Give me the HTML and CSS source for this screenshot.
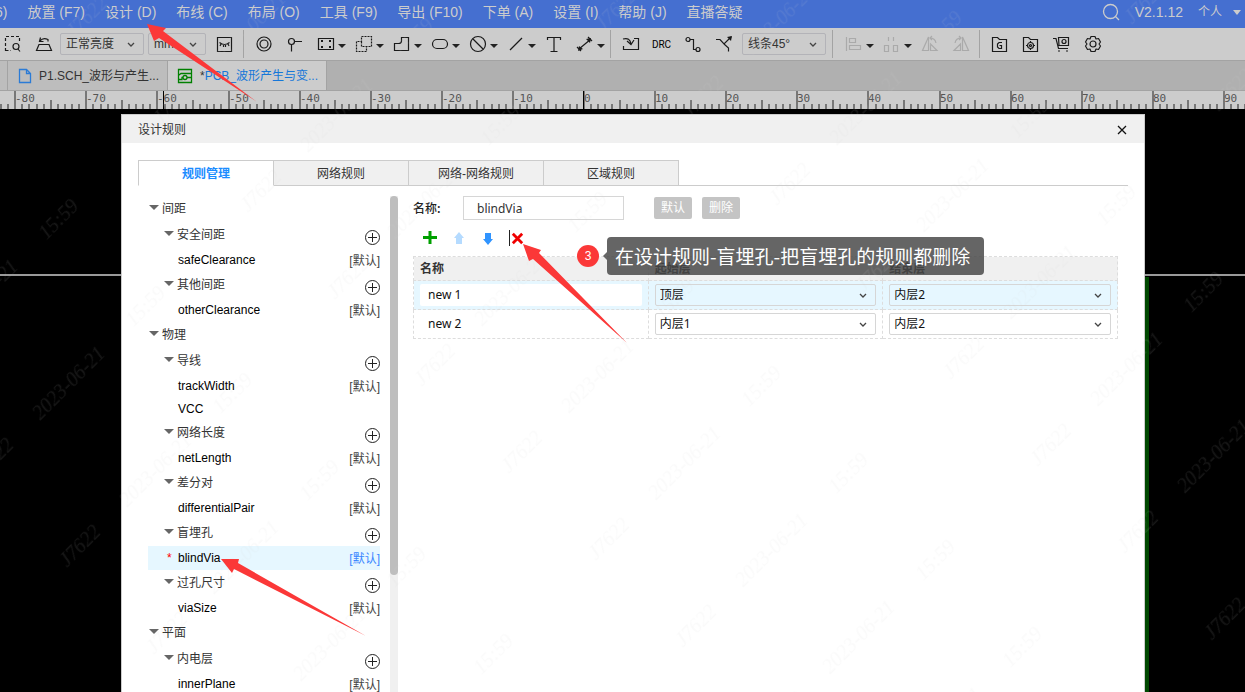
FILE: index.html
```html
<!DOCTYPE html>
<html lang="zh-CN">
<head>
<meta charset="utf-8">
<title>设计规则</title>
<link rel="stylesheet" href="styles.css">
</head>
<body>
<div class="app">
  <header class="menubar">
    <nav class="menu">
      <a href="#">6)</a><a href="#">放置 (F7)</a><a href="#">设计 (D)</a><a href="#">布线 (C)</a><a href="#">布局 (O)</a><a href="#">工具 (F9)</a><a href="#">导出 (F10)</a><a href="#">下单 (A)</a><a href="#">设置 (I)</a><a href="#">帮助 (J)</a><a href="#">直播答疑</a>
    </nav>
    <div class="account">
      <button class="search" aria-label="搜索"><svg width="18" height="18" viewBox="0 0 18 18"><circle cx="8.500" cy="8.500" r="7"/><path d="M13.500 13.500L17 17"/></svg></button>
      <span class="version">V2.1.12</span>
      <button class="user">个人<i class="caret caret-light"></i></button>
    </div>
  </header>

  <div class="toolbar">
    <button class="tool" aria-label="框选缩放"><svg viewBox="0 0 20 20"><path stroke-dasharray="3 2" d="M2.500 17V2.500H16.500V8M2.500 16.500H8"/><circle cx="13" cy="12.500" r="3"/><path d="M15 15L17 17.500"/></svg></button>
    <button class="tool" aria-label="翻板"><svg viewBox="0 0 20 20"><path d="M5 10.500L2.500 16.500H17.500L15 10.500Z M6 7Q9 3 14 5.500V7.500M6.500 3.500L5.500 7.500H9.500"/></svg></button>
    <select class="field brightness" aria-label="亮度"><option>正常亮度</option></select>
    <select class="field unit" aria-label="单位"><option>mm</option></select>
    <button class="tool" aria-label="隐藏"><svg viewBox="0 0 20 20"><path d="M2.500 3.500H16.500V17.500H2.500Z M4.500 8.500Q9.500 12.500 14.500 8.500M6 10L5 12M8.500 11V13M10.500 11V13M13 10L14 12"/></svg></button>
    <i class="divider"></i>
    <button class="tool" aria-label="焊盘"><svg viewBox="0 0 20 20"><circle cx="10" cy="10" r="7"/><circle cx="10" cy="10" r="4"/></svg></button>
    <button class="tool" aria-label="过孔"><svg viewBox="0 0 20 20"><circle cx="6.500" cy="7.500" r="3"/><path d="M9.500 7.500H17M6.500 10.500V17.500"/></svg></button>
    <button class="tool wide" aria-label="封装"><svg viewBox="0 0 20 20"><path d="M2.500 4.500H17.500V15.500H2.500Z"/><path d="M5 7H7M13 7H15M5 13H7M13 13H15" stroke-width="2"/></svg><i class="caret"></i></button>
    <button class="tool wide" aria-label="区域"><svg viewBox="0 0 20 20"><path stroke-dasharray="2 1" d="M7.500 2.500H17.500V12.500H12.500V17.500H2.500V7.500H7.500Z M7.500 7.500V12.500H12.500"/></svg><i class="caret"></i></button>
    <button class="tool wide" aria-label="填充"><svg viewBox="0 0 20 20"><path d="M9.500 3.500H16.500V16.500H2.500V9.500H6.500Q9.500 9.500 9.500 7Z"/></svg><i class="caret"></i></button>
    <button class="tool wide" aria-label="槽"><svg viewBox="0 0 20 20"><rect x="2.500" y="5.500" width="15" height="9" rx="4.500"/></svg><i class="caret"></i></button>
    <button class="tool wide" aria-label="禁止区"><svg viewBox="0 0 20 20"><circle cx="10" cy="10" r="7.500"/><path d="M5 5L15 15"/></svg><i class="caret"></i></button>
    <button class="tool wide" aria-label="线"><svg viewBox="0 0 20 20"><path d="M4 16L16 4"/></svg><i class="caret"></i></button>
    <button class="tool" aria-label="文本"><svg viewBox="0 0 20 20"><path d="M3.500 6V3.500H16.500V6M10 3.500V17M6.500 17.500H13.500"/></svg></button>
    <button class="tool wide" aria-label="尺寸"><svg viewBox="0 0 20 20"><path d="M4 15L16 5M2 13L6 17M13 3L17 7"/><path class="solid" d="M3 17L4 12L8 15Z M16 4L11 5L15 9Z"/></svg><i class="caret"></i></button>
    <i class="divider"></i>
    <button class="tool" aria-label="导入变更"><svg viewBox="0 0 20 20"><path d="M13 4.500H17.500V15.500H2.500V12M2 5Q9 3 10 10M6 7L10 10.500L13 6"/></svg></button>
    <button class="tool drc" aria-label="检查">DRC</button>
    <button class="tool" aria-label="布线"><svg viewBox="0 0 20 20"><circle cx="5" cy="5.500" r="2"/><circle cx="15" cy="15.500" r="2"/><path d="M7 5.500H10.500V15.500H13"/></svg></button>
    <button class="tool" aria-label="推挤"><svg viewBox="0 0 20 20"><path d="M2 5.500H6L10 10L17 3M10 10L14.500 14V17.500"/><path class="solid" d="M18 2L13 3L17 7Z"/></svg></button>
    <select class="field corner" aria-label="拐角"><option>线条45°</option></select>
    <i class="divider"></i>
    <button class="tool wide faded" aria-label="对齐"><svg viewBox="0 0 20 20"><path d="M2.500 3V17M5.500 4.500H11.500V8.500H5.500Z M5.500 11.500H16.500V15.500H5.500Z"/></svg><i class="caret"></i></button>
    <button class="tool wide faded" aria-label="分布"><svg viewBox="0 0 20 20"><path d="M6.500 3V7M11.500 3V7M2.500 11.500H6.500V17.500H2.500Z M11.500 11.500H15.500V17.500H11.500Z"/></svg><i class="caret"></i></button>
    <button class="tool faded" aria-label="左旋"><svg viewBox="0 0 20 20"><path d="M8.500 3V16.500H2.500Z M10.500 10L17 16.500H10.500Z M10 4Q15 4 16 9M12 2L10 4L12 6"/></svg></button>
    <button class="tool faded" aria-label="右旋"><svg viewBox="0 0 20 20"><path d="M11.500 3V16.500H17.500Z M9.500 10L3 16.500H9.500Z M10 4Q5 4 4 9M8 2L10 4L8 6"/></svg></button>
    <i class="divider"></i>
    <button class="tool" aria-label="Gerber"><svg viewBox="0 0 20 20"><path d="M2.500 17.500V3.500H7.500L9.500 5.500H16.500V17.500Z M12 8.500H9L7.500 10V13L9 14.500H11.500V11.500H9.500"/></svg></button>
    <button class="tool" aria-label="坐标文件"><svg viewBox="0 0 20 20"><path d="M2.500 17.500V3.500H7.500L9.500 5.500H16.500V17.500Z M9.500 7V9M9.500 14V16M5 11.500H7M12 11.500H14"/><circle cx="9.500" cy="11.500" r="3"/><circle cx="9.500" cy="11.500" r="1"/></svg></button>
    <button class="tool" aria-label="下单"><svg viewBox="0 0 20 20"><path d="M1 4.500H4L6.500 14.500H16M6.500 3.500H16.500V11.500H7Z M6 17H8M14 17H16"/><circle cx="12" cy="7.500" r="2"/></svg></button>
    <button class="tool" aria-label="设置"><svg viewBox="0 0 20 20"><path stroke-linejoin="round" d="M8 2.500H12L13 5L15.500 4.500L17.500 8L16 10L17.500 12L15.500 15.500L13 15L12 17.500H8L7 15L4.500 15.500L2.500 12L4 10L2.500 8L4.500 4.500L7 5Z"/><circle cx="10" cy="10" r="3"/></svg></button>
  </div>

  <div class="doctabs">
    <span class="stub"></span>
    <button class="doctab"><svg width="14" height="16" viewBox="0 0 14 16"><path d="M1.500 1.500H8.500L12.500 5.500V14.500H1.500Z M8.500 1.500V5.500H12.500"/></svg><span>P1.SCH_波形与产生...</span></button>
    <button class="doctab current"><svg width="16" height="16" viewBox="0 0 16 16"><path d="M1.500 1.500H14.500V14.500H1.500Z M2 7L4 5.500H14M2 11.500H5V9.500H6M10 9.500H14"/><circle cx="8" cy="9.500" r="2"/></svg><span><b>*</b>PCB_波形产生与变...</span></button>
  </div>

  <svg class="ruler" aria-hidden="true"></svg>

  <main class="canvas">
    <div class="outline"></div>
    <div class="board"></div>
    <section class="dialog" role="dialog" aria-label="设计规则">
      <div class="dialog-head"><h1>设计规则</h1><button aria-label="关闭"><svg width="10" height="10" viewBox="0 0 10 10"><path d="M1 1L9 9M9 1L1 9"/></svg></button></div>
      <div class="rule-tabs">
        <button class="active">规则管理</button><button>网络规则</button><button>网络-网络规则</button><button>区域规则</button>
      </div>
      <div class="rule-body">
        <ul class="tree">
          <li class="top"><i class="caret"></i><span>间距</span></li>
          <li class="sub"><i class="caret"></i><span>安全间距</span><button aria-label="添加"></button></li>
          <li class="leaf"><span>safeClearance</span><em>[默认]</em></li>
          <li class="sub"><i class="caret"></i><span>其他间距</span><button aria-label="添加"></button></li>
          <li class="leaf"><span>otherClearance</span><em>[默认]</em></li>
          <li class="top"><i class="caret"></i><span>物理</span></li>
          <li class="sub"><i class="caret"></i><span>导线</span><button aria-label="添加"></button></li>
          <li class="leaf"><span>trackWidth</span><em>[默认]</em></li>
          <li class="leaf plain"><span>VCC</span></li>
          <li class="sub"><i class="caret"></i><span>网络长度</span><button aria-label="添加"></button></li>
          <li class="leaf"><span>netLength</span><em>[默认]</em></li>
          <li class="sub"><i class="caret"></i><span>差分对</span><button aria-label="添加"></button></li>
          <li class="leaf"><span>differentialPair</span><em>[默认]</em></li>
          <li class="sub"><i class="caret"></i><span>盲埋孔</span><button aria-label="添加"></button></li>
          <li class="leaf selected"><b>*</b><span>blindVia</span><em>[默认]</em></li>
          <li class="sub"><i class="caret"></i><span>过孔尺寸</span><button aria-label="添加"></button></li>
          <li class="leaf"><span>viaSize</span><em>[默认]</em></li>
          <li class="top"><i class="caret"></i><span>平面</span></li>
          <li class="sub"><i class="caret"></i><span>内电层</span><button aria-label="添加"></button></li>
          <li class="leaf"><span>innerPlane</span><em>[默认]</em></li>
        </ul>
        <div class="scroll"><div class="thumb"></div></div>
        <div class="detail">
          <div class="name-row">
            <label for="rule-name">名称:</label><input id="rule-name" value="blindVia">
            <button disabled>默认</button><button disabled>删除</button>
          </div>
          <div class="actions">
            <button aria-label="新增"><svg viewBox="0 0 16 16"><path stroke="#00a000" stroke-width="3" d="M8 1V14M1 7.500H15"/></svg></button>
            <button aria-label="上移"><svg viewBox="0 0 16 16"><path fill="#b5dbff" d="M8 2L13 8H11V14H5V8H3Z"/></svg></button>
            <button aria-label="下移"><svg viewBox="0 0 16 16"><path fill="#3094ff" d="M8 15L13 9H11V3H5V9H3Z"/></svg></button>
            <button class="remove" aria-label="移除"><svg viewBox="0 0 16 16"><path stroke="#f00000" stroke-width="3" d="M3 3L13 13M13 3L3 13"/></svg></button>
          </div>
          <table>
            <thead><tr><th>名称</th><th>起始层</th><th>结束层</th></tr></thead>
            <tbody>
              <tr class="picked">
                <td><input aria-label="名称" value="new 1"></td>
                <td><select aria-label="起始层"><option>顶层</option></select></td>
                <td><select aria-label="结束层"><option>内层2</option></select></td>
              </tr>
              <tr>
                <td><input aria-label="名称" value="new 2"></td>
                <td><select aria-label="起始层"><option>内层1</option></select></td>
                <td><select aria-label="结束层"><option>内层2</option></select></td>
              </tr>
            </tbody>
          </table>
        </div>
      </div>
    </section>
  </main>

  <div class="callout"><span class="step">3</span><p>在设计规则-盲埋孔-把盲埋孔的规则都删除</p></div>

  <svg class="overlay" aria-hidden="true">
    <defs>
      <pattern id="stamp" width="379" height="123" patternUnits="userSpaceOnUse" patternTransform="rotate(-45)">
        <text x="25" y="80">J7622</text><text x="110" y="80">2023-06-21</text><text x="242" y="80">15:59</text>
      </pattern>
    </defs>
    <rect class="stamps" width="100%" height="100%" fill="url(#stamp)"/>
    <g class="arrows">
      <path d="M147 24L166 28L163 31L257 102L159 38L154 41Z"/>
      <path d="M523 244L541 250L539 253L627 343L533 259L529 261Z"/>
      <path d="M221 559L239 559L238 563L366 636L234 569L232 573Z"/>
    </g>
  </svg>
</div>
<script src="ruler.js"></script>
</body>
</html>
```

FILE: ruler.js
```js
const ns = 'http://www.w3.org/2000/svg';
const ruler = document.querySelector('.ruler');
const origin = 583;
const tenUnits = 71.1;

function add(tag, attrs, text) {
  const el = document.createElementNS(ns, tag);
  for (const key in attrs) el.setAttribute(key, attrs[key]);
  if (text !== undefined) el.textContent = text;
  ruler.appendChild(el);
}

for (let unit = -82; unit <= 93; unit++) {
  const x = Math.round(origin + unit * tenUnits / 10);
  const major = unit % 10 === 0;
  const top = major ? 0 : unit % 5 === 0 ? 9 : 13;
  add('rect', { x, y: top, width: 2, height: 18 - top, class: 'tick' });
  if (major) add('text', { x: x + 1, y: 11 }, unit);
}
for (const x of [163, origin]) add('rect', { x, y: 0, width: 1, height: 18, class: 'mark' });
```

FILE: styles.css
```css
* { box-sizing: border-box; }
body {
  margin: 0;
  font: 12px/16px "Liberation Sans", "Noto Sans CJK SC", sans-serif;
  color: #333;
}
button, input, select { font: inherit; color: inherit; margin: 0; padding: 0; border: 0; background: none; }
h1, p, ul { margin: 0; padding: 0; font-size: 12px; font-weight: normal; }
svg { fill: none; display: block; flex: none; }

.app {
  position: relative;
  height: 100vh;
  overflow: hidden;
  display: flex;
  flex-direction: column;
  background: #000;
}

.caret {
  flex: none;
  width: 0;
  border: 4px solid transparent;
  border-top: 4px solid #222;
  border-bottom: 0;
}
.caret-light { border-top: 5px solid #ccc; }

.menubar {
  flex: none;
  height: 28px;
  padding-bottom: 4px;
  display: flex;
  align-items: center;
  justify-content: space-between;
  background: #456fd0;
  color: #ccc;
  font-size: 14px;
}
.menu { display: flex; gap: 20px; margin-left: -5px; white-space: nowrap; }
.menu a { color: inherit; text-decoration: none; }
.account { display: flex; align-items: center; gap: 15px; padding-right: 4px; }
.search svg { stroke: #ccc; stroke-width: 1.3; }
.user { display: flex; align-items: center; gap: 11px; font-size: 12px; }

.toolbar {
  flex: none;
  height: 33px;
  display: flex;
  align-items: center;
  background: #ccc;
  border-bottom: 1px solid #a3a3a3;
}
.tool {
  flex: none;
  width: 31px;
  height: 24px;
  display: flex;
  align-items: center;
  justify-content: center;
}
.tool:first-child { margin-left: -3px; }
.tool svg { width: 20px; height: 20px; stroke: #1a1a1a; stroke-width: 1.2; }
.tool .solid { fill: #1a1a1a; stroke: none; }
.tool .caret { margin-top: 3px; }
.tool.wide { width: 38px; justify-content: flex-start; padding-left: 6px; gap: 2px; }
.tool.faded svg { stroke: #aaa; }
.tool.drc { font: 10px Roboto, sans-serif; color: #000; }
.divider { flex: none; width: 1px; height: 28px; margin: 0 4px 0 3px; background: #a3a3a3; }

select {
  appearance: none;
  background: url("data:image/svg+xml,%3Csvg xmlns='http://www.w3.org/2000/svg' width='8' height='5'%3E%3Cpath d='M1 1L4 4L7 1' fill='none' stroke='%23444' stroke-width='1.300'/%3E%3C/svg%3E") no-repeat right 8px center;
}
.field { flex: none; height: 22px; padding-left: 5px; border: 1px solid #b3b3b8; border-radius: 2px; }
.brightness { width: 84px; margin: 0 4px 0 1px; }
.unit { width: 58px; margin-right: 3px; }
.corner { width: 84px; margin: 0 3px; }
.corner + .divider { margin-right: 5px; }

.doctabs { flex: none; height: 30px; display: flex; background: #b0b0b0; border-bottom: 1px solid #a3a3a3; }
.stub { width: 8px; background: #bdbdbd; border-right: 1px solid #a3a3a3; }
.doctab {
  width: 160px;
  display: flex;
  align-items: center;
  gap: 7px;
  padding-left: 10px;
  background: #bdbdbd;
  border-right: 1px solid #a3a3a3;
  white-space: nowrap;
}
.doctab svg { stroke: #2b7bd6; stroke-width: 1.3; }
.doctab.current { width: 159px; padding-left: 9px; background: #ccc; color: #1677d9; }
.doctab.current svg { stroke: #008000; }
.doctab b { color: #333; font-weight: normal; }

.ruler { flex: none; width: 100%; height: 18px; background: #ccc; shape-rendering: crispEdges; }
.ruler text { font: 11px "DejaVu Sans Mono", monospace; fill: #555; }
.tick { fill: #777; }
.mark { fill: #000; }

.canvas { position: relative; flex: 1; min-height: 0; overflow: hidden; padding: 5px 100px 0 121px; }
.outline { position: absolute; left: 0; right: 0; top: 165px; height: 2px; background: #999; }
.board { position: absolute; right: 96px; width: 5px; top: 168px; bottom: 0; background: #004800; }

.dialog {
  position: relative;
  background: #fff;
  border: 1px solid #ccc;
  border-bottom: 0;
  min-height: 100%;
}
.dialog-head { height: 28px; padding: 2px 17px 0 16px; display: flex; align-items: center; justify-content: space-between; background: #f0f0f0; }
.dialog-head svg { stroke: #111; stroke-width: 1.3; }

.rule-tabs { display: flex; margin: 17px 16px 0; height: 26px; border-bottom: 1px solid #ccc; }
.rule-tabs button { width: 135px; height: 26px; padding-top: 2px; background: #f0f0f0; border: 1px solid #ccc; border-left-width: 0; }
.rule-tabs .active { width: 136px; background: #fff; border-left-width: 1px; border-bottom-color: #fff; color: #1a8cff; font-weight: bold; }

.rule-body { display: flex; margin-top: 10px; padding: 0 26px 0 26px; }

.tree { flex: none; width: 232px; list-style: none; }
.tree li { height: 26px; display: flex; align-items: center; }
.tree .caret { margin: 0 3px 4px 0; border-width: 5px 5px 0; border-top-color: #666; }
.tree .top { padding-left: 1px; }
.tree .sub { padding-left: 16px; }
.tree .leaf { height: 24px; padding-left: 30px; color: #000; }
.tree .plain { height: 22px; }
.tree em { margin-left: auto; padding-top: 2px; font-style: normal; color: #444; }
.tree button {
  width: 15px;
  height: 15px;
  margin: 5px 0 0 auto;
  border: 1px solid #222;
  border-radius: 50%;
  background:
    linear-gradient(#222, #222) center / 9px 1px no-repeat,
    linear-gradient(#222, #222) center / 1px 9px no-repeat;
}
.tree .selected { background: #e6f7ff; padding-left: 19px; }
.tree .selected b { width: 11px; color: #f00; font-weight: normal; }
.tree .selected em { color: #3a86ff; }

.scroll { flex: none; width: 8px; margin-left: 10px; background: #f0f0f0; }
.thumb { height: 379px; border-radius: 4px; background: #bebebe; }

.detail { flex: 1; min-width: 0; padding-left: 15px; font-family: "Noto Sans", "Noto Sans CJK SC", sans-serif; }
.name-row { display: flex; align-items: center; height: 24px; }
.name-row label { width: 50px; font-weight: 500; font-family: "Noto Sans CJK SC", sans-serif; color: #222; }
.name-row input { width: 161px; height: 24px; padding-left: 13px; margin-right: 20px; border: 1px solid #d6d6d6; }
.name-row button { width: 38px; height: 22px; margin-left: 10px; border-radius: 2px; background: #c4c4c4; color: #fff; }
.actions { display: flex; gap: 13px; height: 36px; padding: 10px 0 0 9px; }
.actions svg { width: 16px; height: 16px; }
.actions button { height: 16px; }
.actions .remove { border-left: 1px solid #222; }
.actions .remove svg { width: 15px; height: 15px; }

table { width: 100%; table-layout: fixed; border-collapse: collapse; }
th, td { border: 1px dashed #ddd; padding: 0 6px; text-align: left; }
th { height: 24px; background: #f0f0f0; font-weight: bold; color: #333; }
td { height: 29px; color: #111; }
td input { width: 100%; height: 22px; padding: 0 0 2px 8px; background: #fff; border-radius: 2px; display: block; }
td select { width: 100%; height: 22px; padding-left: 4px; border: 1px solid #d6d6d6; border-radius: 2px; display: block; }
.picked { background: #e6f7ff; }

.callout { position: absolute; left: 577px; top: 237px; display: flex; align-items: center; gap: 8px; }
.step { width: 22px; height: 22px; border-radius: 50%; background: #fb3838; color: #fff; line-height: 22px; text-align: center; }
.callout p {
  position: relative;
  height: 38px;
  padding: 0 14px 0 8px;
  border-radius: 4px;
  background: rgba(70, 70, 70, .83);
  color: #fff;
  font: 19px/38px "Noto Sans CJK SC", sans-serif;
  white-space: nowrap;
}
.callout p::before {
  content: "";
  position: absolute;
  right: 100%;
  top: 15px;
  border: 4px solid transparent;
  border-right-color: #666;
  border-left: 0;
}

.overlay { position: absolute; inset: 0; width: 100%; height: 100%; pointer-events: none; }
.overlay text { font: italic 20px "Liberation Serif", serif; fill: #d0d0d0; }
.stamps { opacity: .11; }
.arrows { fill: #fb3838; }
```
